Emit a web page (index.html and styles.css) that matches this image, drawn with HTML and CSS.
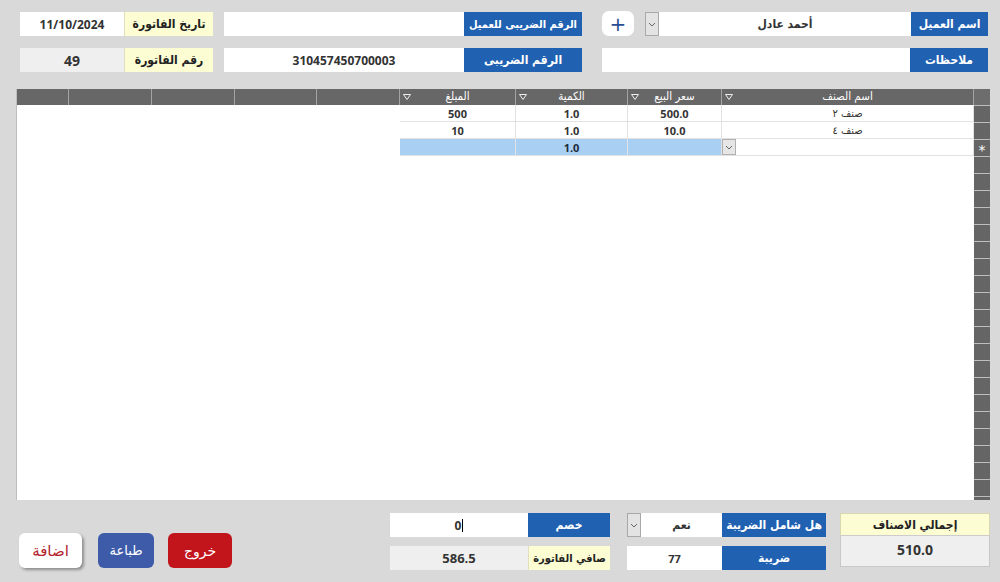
FILE: index.html
```html
<!DOCTYPE html>
<html lang="ar">
<head>
<meta charset="utf-8">
<title>فاتورة</title>
<link rel="stylesheet" href="styles.css">
</head>
<body>
<div class="page">
  <div class="row r1">
    <div class="f w104 b">11/10/2024</div>
    <div class="ly w89" dir="rtl">تاريخ الفاتورة</div>
    <div class="f w240 ml11"></div>
    <div class="lb w118 tight" dir="rtl">الرقم الضريبى للعميل</div>
    <div class="plus ml20">+</div>
    <div class="dd ml11"><svg width="8" height="5" viewBox="0 0 8 5"><path d="M1 1 L4 4 L7 1" fill="none" stroke="#666" stroke-width="1"/></svg></div>
    <div class="f w252 ar" dir="rtl">أحمد عادل</div>
    <div class="lb w77" dir="rtl">اسم العميل</div>
  </div>
  <div class="row r2">
    <div class="f g w104 b big">49</div>
    <div class="ly w89" dir="rtl">رقم الفاتورة</div>
    <div class="f w240 ml11 b">310457450700003</div>
    <div class="lb w118" dir="rtl">الرقم الضريبى</div>
    <div class="f w308 ml20"></div>
    <div class="lb w78" dir="rtl">ملاحظات</div>
  </div>

  <div class="grid">
    <div class="ghead">
      <div class="hc"></div><div class="hc"></div><div class="hc"></div><div class="hc"></div><div class="hc"></div>
      <div class="hc"><svg class="fi" width="8" height="6" viewBox="0 0 8 6"><path d="M0.5 0.5 H7.5 L4 5.5 Z" fill="none" stroke="#eee" stroke-width="1"/></svg><span dir="rtl">المبلغ</span></div>
      <div class="hc"><svg class="fi" width="8" height="6" viewBox="0 0 8 6"><path d="M0.5 0.5 H7.5 L4 5.5 Z" fill="none" stroke="#eee" stroke-width="1"/></svg><span dir="rtl">الكمية</span></div>
      <div class="hc"><svg class="fi" width="8" height="6" viewBox="0 0 8 6"><path d="M0.5 0.5 H7.5 L4 5.5 Z" fill="none" stroke="#eee" stroke-width="1"/></svg><span dir="rtl">سعر البيع</span></div>
      <div class="hc"><svg class="fi" width="8" height="6" viewBox="0 0 8 6"><path d="M0.5 0.5 H7.5 L4 5.5 Z" fill="none" stroke="#eee" stroke-width="1"/></svg><span dir="rtl">اسم الصنف</span></div>
      <div class="hc sel"></div>
    </div>
    <div class="gbody">
      <div class="rows">
        <div class="tr">
          <div class="e"></div><div class="e"></div><div class="e"></div><div class="e"></div><div class="e"></div>
          <div class="td b">500</div><div class="td b">1.0</div><div class="td b">500.0</div><div class="td ar" dir="rtl">صنف ٢</div>
        </div>
        <div class="tr">
          <div class="e"></div><div class="e"></div><div class="e"></div><div class="e"></div><div class="e"></div>
          <div class="td b">10</div><div class="td b">1.0</div><div class="td b">10.0</div><div class="td ar" dir="rtl">صنف ٤</div>
        </div>
        <div class="tr">
          <div class="e"></div><div class="e"></div><div class="e"></div><div class="e"></div><div class="e"></div>
          <div class="td hl"></div><div class="td hl b">1.0</div><div class="td hl"></div>
          <div class="td nm"><div class="cdd"><svg width="8" height="5" viewBox="0 0 8 5"><path d="M1 1 L4 4 L7 1" fill="none" stroke="#666" stroke-width="1"/></svg></div></div>
        </div>
      </div>
      <div class="selector">
        <div class="sc"></div><div class="sc"></div><div class="sc star">*</div>
      </div>
    </div>
  </div>

  <div class="bottom">
    <div class="btns">
      <div class="btn add" dir="rtl">اضافة</div>
      <div class="btn print" dir="rtl">طباعة</div>
      <div class="btn exit" dir="rtl">خروج</div>
    </div>
    <div class="blk blk1">
      <div class="row">
        <div class="f w138 b">0<span class="caret"></span></div>
        <div class="lb w82" dir="rtl">خصم</div>
      </div>
      <div class="row mt9">
        <div class="f g w138 b num">586.5</div>
        <div class="ly w82 tight" dir="rtl">صافي الفاتورة</div>
      </div>
    </div>
    <div class="blk blk2">
      <div class="row">
        <div class="dd"><svg width="8" height="5" viewBox="0 0 8 5"><path d="M1 1 L4 4 L7 1" fill="none" stroke="#666" stroke-width="1"/></svg></div>
        <div class="f w81 ar" dir="rtl">نعم</div>
        <div class="lb w104" dir="rtl">هل شامل الضريبة</div>
      </div>
      <div class="row mt9">
        <div class="f w95 b small">77</div>
        <div class="lb w104" dir="rtl">ضريبة</div>
      </div>
    </div>
    <div class="blk blk3">
      <div class="ly tot" dir="rtl">إجمالي الاصناف</div>
      <div class="totv b">510.0</div>
    </div>
  </div>
</div>
</body>
</html>
```
FILE: styles.css
```css
* { box-sizing: border-box; }
html, body { margin: 0; padding: 0; }
body {
  background: #d9d9d9;
  font-family: "Open Sans", "DejaVu Sans", sans-serif;
  color: #333;
  width: 1000px;
  height: 582px;
  overflow: hidden;
}
.page { padding-top: 12px; }
.row { display: flex; height: 24px; }
.r1 { margin-left: 20px; }
.r2 { margin-left: 20px; margin-top: 12px; }
.mt9 { margin-top: 9px; }

.f, .ly, .lb {
  height: 24px;
  display: flex;
  align-items: center;
  justify-content: center;
  font-size: 12px;
  white-space: nowrap;
  overflow: hidden;
}
.f { background: #fff; color: #333; }
.f.g { background: #efefef; }
.b { font-weight: 700; }
.ar { font-family: "DejaVu Sans Condensed", "DejaVu Sans", sans-serif; font-weight: 700; }
.big { font-size: 14px; }
.num { font-size: 13px; }
.small { font-size: 11px; }
.ly, .lb { font-family: "DejaVu Sans Condensed", "DejaVu Sans", sans-serif; font-weight: 700; font-size: 12px; }
.ly.tight, .lb.tight { font-size: 11px; }
.ly { background: #fdfdd3; color: #222; border-left: 1px solid #e0e0c0; }
.lb { background: #2061b2; color: #fff; }

.w77 { width: 77px; } .w78 { width: 78px; } .w81 { width: 81px; } .w82 { width: 82px; }
.w89 { width: 89px; } .w95 { width: 95px; } .w104 { width: 104px; } .w118 { width: 118px; }
.w138 { width: 138px; } .w240 { width: 240px; } .w252 { width: 252px; } .w308 { width: 308px; }
.ml11 { margin-left: 11px; } .ml20 { margin-left: 20px; }

.plus {
  width: 32px; height: 25px; margin-top: -1px;
  background: #fff; border-radius: 7px;
  display: flex; align-items: center; justify-content: center;
  color: #2a4e96; font-size: 20px; font-weight: 400; line-height: 1;
  font-family: "DejaVu Sans", sans-serif;
}
.dd {
  width: 14px; height: 24px;
  background: #e3e3e3; border: 1px solid #a8a8a8;
  display: flex; align-items: center; justify-content: center;
}

.grid {
  margin: 17px 0 0 16px;
  width: 974px; height: 411px;
  background: #fff;
  border-left: 1px solid #bdbdbd;
  display: flex; flex-direction: column;
}
.ghead {
  display: grid;
  grid-template-columns: 52px 83px 83px 82px 83px 116px 112px 94px 252px 16px;
  height: 16px;
  background: #676767;
}
.hc {
  position: relative;
  border-right: 1px solid #a3a3a3;
  color: #fff;
  font-size: 11.5px;
  font-family: "DejaVu Sans Condensed", "DejaVu Sans", sans-serif;
  display: flex; align-items: center; justify-content: center;
  line-height: 1;
}
.hc .fi { position: absolute; left: 3px; top: 5px; }
.hc.sel { border-right: none; background: #6d6d6d; }
.gbody { display: flex; flex: 1; min-height: 0; }
.rows { width: 957px; }
.tr {
  display: grid;
  grid-template-columns: 52px 83px 83px 82px 83px 116px 112px 94px 252px;
  height: 17px;
}
.td {
  border-right: 1px solid #e2e2e2;
  border-bottom: 1px solid #e2e2e2;
  font-size: 11px;
  display: flex; align-items: center; justify-content: center;
  color: #333;
}
.td.ar { font-weight: 400; font-size: 11px; }
.td.hl { background: #a9cff2; color: #1d2a3a; }
.td.nm { justify-content: flex-start; }
.cdd {
  width: 14px; height: 16px;
  background: #e6e6e6; border: 1px solid #b0b0b0;
  display: flex; align-items: center; justify-content: center;
}
.selector {
  width: 16px;
  background: repeating-linear-gradient(to bottom, #bdbdbd 0 1px, #656565 1px 17px);
}
.sc { height: 17px; }
.sc.star {
  color: #fff; font-size: 14px; font-family: "DejaVu Sans", sans-serif;
  display: flex; align-items: center; justify-content: center; padding-top: 4px;
}

.bottom { display: flex; align-items: flex-start; margin: 13px 0 0 19px; }
.btns { display: flex; margin-top: 20px; }
.btn {
  height: 35px; border-radius: 6px;
  display: flex; align-items: center; justify-content: center;
  font-size: 14px; font-family: "DejaVu Sans", sans-serif;
}
.add { width: 63px; background: #fff; color: #b3232b; box-shadow: 2px 2px 3px rgba(0,0,0,0.35); font-size: 15px; }
.print { width: 56px; margin-left: 16px; background: #3d5ba8; color: #fff; font-size: 13px; }
.exit { width: 64px; margin-left: 14px; background: #c1141b; color: #fff; }

.blk { display: flex; flex-direction: column; }
.blk1 { margin-left: 158px; width: 220px; }
.blk2 { margin-left: 17px; width: 199px; }
.blk3 { margin-left: 14px; width: 150px; }
.caret { display: inline-block; width: 1px; height: 13px; background: #000; margin-left: 1px; }
.tot { height: 23px; border: 1px solid #d8d8b0; border-bottom: 1px solid #ccc; }
.totv {
  height: 31px; background: #efefef;
  border: 1px solid #c8c8c8; border-top: none;
  display: flex; align-items: flex-start; justify-content: center;
  padding-top: 4px; font-size: 14px; color: #333;
}
```
